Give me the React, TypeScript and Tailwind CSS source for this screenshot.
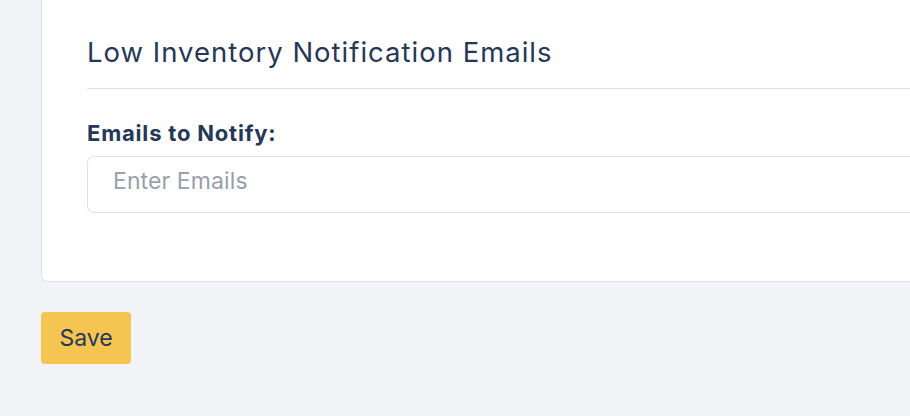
import React from "react";

export default function App() {
  return (
    <div
      className="h-[416px] w-[910px] overflow-hidden bg-[#f3f4f8] pl-[41px]"
      style={{ fontFamily: "Inter, 'Noto Sans', sans-serif" }}
    >
      <div className="w-[920px] rounded-b-[7px] border-x border-b border-[#dfe1e6] bg-white pl-[45px] pb-[68px]">
        <div className="border-b border-[#dfe1e6] pt-[36px] pb-[20px]">
          <h2 className="text-[27.5px] leading-[32px] font-normal tracking-[1px] text-[#253858]">
            Low Inventory Notification Emails
          </h2>
        </div>
        <label className="mt-[30px] block text-[22px] leading-[28px] font-bold tracking-[0.8px] text-[#253858]">
          Emails to Notify:
        </label>
        <input
          type="text"
          placeholder="Enter Emails"
          className="mt-[9px] block h-[57px] w-full rounded-l-[7px] border border-r-0 border-[#dfe1e6] bg-white px-[25px] pb-[7px] text-[23px] tracking-[0.1px] text-[#253858] outline-none placeholder:text-[#97a0ab]"
        />
      </div>
      <button className="mt-[30px] flex h-[52px] w-[90px] items-center justify-center rounded-[4px] bg-[#f5c451] text-[23px] font-normal text-[#253858]">
        Save
      </button>
    </div>
  );
}
